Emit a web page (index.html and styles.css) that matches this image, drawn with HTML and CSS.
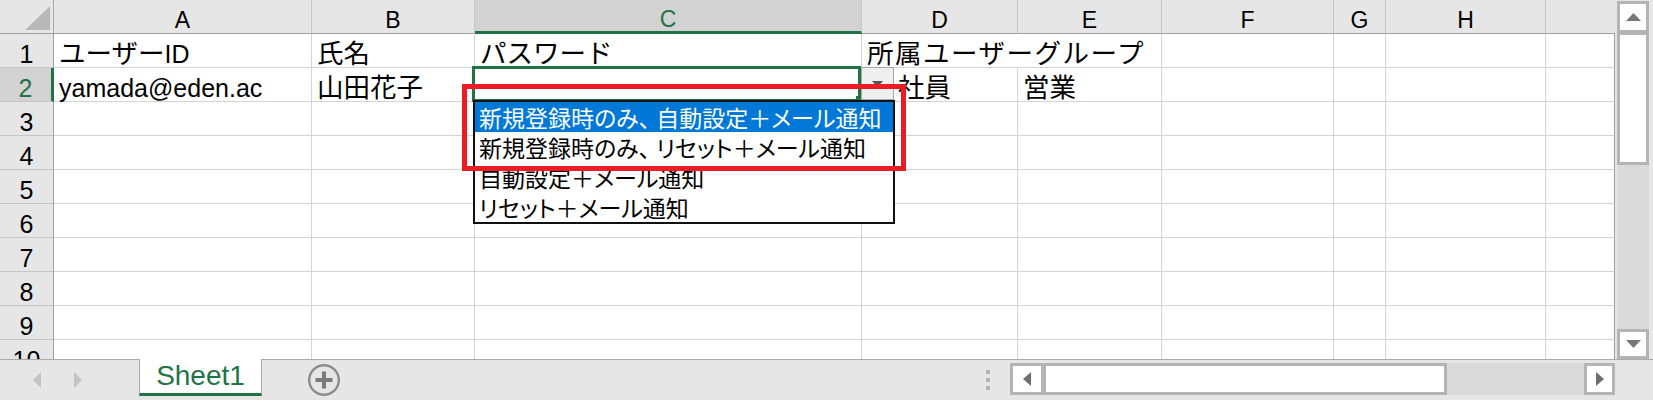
FILE: index.html
```html
<!DOCTYPE html>
<html lang="ja">
<head>
<meta charset="utf-8">
<title>Sheet1</title>
<link rel="stylesheet" href="styles.css">
</head>
<body>
<div class="app">
  <div class="main">
    <div class="sheet">
      <div class="grid">
        <div class="corner"><span class="tri"></span></div>
        <div class="ch">A</div>
        <div class="ch">B</div>
        <div class="ch sel">C</div>
        <div class="ch">D</div>
        <div class="ch">E</div>
        <div class="ch">F</div>
        <div class="ch">G</div>
        <div class="ch">H</div>
        <div class="ch lastch"></div>

        <div class="rh">1</div>
        <div class="c"><span class="ja">ユーザー</span>ID</div>
        <div class="c"><span class="ja">氏名</span></div>
        <div class="c"><span class="ja">パスワード</span></div>
        <div class="c over"><span class="ja wide">所属ユーザーグループ</span></div>
        <div class="c"></div>
        <div class="c"></div>
        <div class="c"></div>
        <div class="c"></div>
        <div class="c last"></div>

        <div class="rh selr">2</div>
        <div class="c">yamada@eden.ac</div>
        <div class="c"><span class="ja">山田花子</span></div>
        <div class="c"></div>
        <div class="c d2"><span class="ja">社員</span></div>
        <div class="c"><span class="ja">営業</span></div>
        <div class="c"></div>
        <div class="c"></div>
        <div class="c"></div>
        <div class="c last"></div>

        <div class="rh">3</div>
        <div class="c"></div><div class="c"></div><div class="c"></div><div class="c"></div><div class="c"></div><div class="c"></div><div class="c"></div><div class="c"></div><div class="c last"></div>
        <div class="rh">4</div>
        <div class="c"></div><div class="c"></div><div class="c"></div><div class="c"></div><div class="c"></div><div class="c"></div><div class="c"></div><div class="c"></div><div class="c last"></div>
        <div class="rh">5</div>
        <div class="c"></div><div class="c"></div><div class="c"></div><div class="c"></div><div class="c"></div><div class="c"></div><div class="c"></div><div class="c"></div><div class="c last"></div>
        <div class="rh">6</div>
        <div class="c"></div><div class="c"></div><div class="c"></div><div class="c"></div><div class="c"></div><div class="c"></div><div class="c"></div><div class="c"></div><div class="c last"></div>
        <div class="rh">7</div>
        <div class="c"></div><div class="c"></div><div class="c"></div><div class="c"></div><div class="c"></div><div class="c"></div><div class="c"></div><div class="c"></div><div class="c last"></div>
        <div class="rh">8</div>
        <div class="c"></div><div class="c"></div><div class="c"></div><div class="c"></div><div class="c"></div><div class="c"></div><div class="c"></div><div class="c"></div><div class="c last"></div>
        <div class="rh">9</div>
        <div class="c"></div><div class="c"></div><div class="c"></div><div class="c"></div><div class="c"></div><div class="c"></div><div class="c"></div><div class="c"></div><div class="c last"></div>
        <div class="rh">10</div>
        <div class="c"></div><div class="c"></div><div class="c"></div><div class="c"></div><div class="c"></div><div class="c"></div><div class="c"></div><div class="c"></div><div class="c last"></div>
      </div>

      <div class="selbox"></div>
      <div class="fill"></div>
      <div class="ddbtn"><svg width="11" height="6" viewBox="0 0 11 6"><path d="M0 0H11L5.5 6Z" fill="#555"/></svg></div>
      <div class="dd">
        <div class="it on">新規登録時のみ<span class="comma">、</span>自動設定＋メール通知</div>
        <div class="it">新規登録時のみ<span class="comma">、</span>リセット＋メール通知</div>
        <div class="it">自動設定＋メール通知</div>
        <div class="it">リセット＋メール通知</div>
      </div>
      <div class="mark"></div>
    </div>

    <div class="vscroll">
      <div class="vbtn"><svg width="15" height="8" viewBox="0 0 15 8"><path d="M0 8H15L7.5 0Z" fill="#777"/></svg></div>
      <div class="vthumb"></div>
      <div class="vtrack"></div>
      <div class="vbtn down"><svg width="15" height="8" viewBox="0 0 15 8"><path d="M0 0H15L7.5 8Z" fill="#777"/></svg></div>
    </div>
  </div>

  <div class="tabbar">
    <div class="nav">
      <svg width="8" height="16" viewBox="0 0 8 16"><path d="M8 0V16L0 8Z" fill="#c4c4c4"/></svg>
      <svg width="8" height="16" viewBox="0 0 8 16"><path d="M0 0V16L8 8Z" fill="#c4c4c4"/></svg>
    </div>
    <div class="tab">Sheet1</div>
    <div class="add">
      <svg width="34" height="34" viewBox="0 0 34 34"><circle cx="17" cy="17" r="14.8" fill="none" stroke="#8c8c8c" stroke-width="2.4"/><path d="M17 8.5V25.5M8.5 17H25.5" stroke="#7a7a7a" stroke-width="4"/></svg>
    </div>
    <div class="dots"><i></i><i></i><i></i></div>
    <div class="hscroll">
      <div class="hbtn"><svg width="8" height="14" viewBox="0 0 8 14"><path d="M8 0V14L0 7Z" fill="#6f6f6f"/></svg></div>
      <div class="hthumb"></div>
      <div class="htrack"></div>
      <div class="hbtn right"><svg width="8" height="14" viewBox="0 0 8 14"><path d="M0 0V14L8 7Z" fill="#6f6f6f"/></svg></div>
    </div>
    <div class="corner2"></div>
  </div>
</div>
</body>
</html>
```

FILE: styles.css
```css
* { box-sizing: border-box; margin: 0; padding: 0; }
html, body { width: 1653px; height: 400px; overflow: hidden; background: #fff; }
body { font-family: "Liberation Sans", "Noto Sans CJK JP", sans-serif; color: #000; }

.app { display: flex; flex-direction: column; width: 1653px; height: 400px; }
.main { display: flex; height: 359px; }

.sheet { position: relative; width: 1615px; height: 359px; overflow: hidden; background: #fff; }
.grid {
  display: grid;
  grid-template-columns: 54px 258px 163px 387px 156px 144px 172px 52px 160px 69px;
  grid-auto-rows: 34px;
}

.corner {
  background: #e6e6e6;
  border-right: 1px solid #ababab;
  border-bottom: 1px solid #9f9f9f;
  display: flex; justify-content: flex-end; align-items: flex-end;
  padding: 0 3px 3px 0;
}
.tri { width: 25px; height: 24px; background: #b9b9b9; clip-path: polygon(100% 0, 100% 100%, 0 100%); }

.ch {
  background: #e6e6e6;
  border-right: 1px solid #c6c6c6;
  border-bottom: 1px solid #9f9f9f;
  font-size: 23px; line-height: 23px;
  display: flex; justify-content: center; align-items: flex-end;
  padding-bottom: 1px;
}
.ch.sel { background: #d2d2d2; color: #217346; border-bottom: 3px solid #217346; padding-bottom: 0; }
.ch.lastch { border-right: none; }

.rh {
  background: #e6e6e6;
  border-right: 1px solid #9f9f9f;
  border-bottom: 1px solid #c6c6c6;
  font-size: 25px; line-height: 25px;
  display: flex; justify-content: center; align-items: flex-end;
}
.rh.selr { background: #d2d2d2; color: #217346; border-right: 3px solid #217346; }

.c {
  border-right: 1px solid #d4d4d4;
  border-bottom: 1px solid #d4d4d4;
  font-size: 25px; line-height: 25px;
  display: flex; align-items: flex-end;
  padding: 0 5px;
  white-space: nowrap;
}
.c.over { border-right: none; }
.c.last { border-right: 1px solid #9f9f9f; }
.c.d2 { padding-left: 36px; }
.ja { font-size: 26.5px; }
.ja.wide { letter-spacing: 1.5px; }

.selbox {
  position: absolute; left: 472px; top: 66px; width: 389px; height: 36px;
  border: 3px solid #217346;
}
.fill { position: absolute; left: 856px; top: 96px; width: 6px; height: 6px; background: #217346; }

.ddbtn {
  position: absolute; left: 861px; top: 67px; width: 33px; height: 33px;
  background: #efefef; border: 1px solid #a8a8a8;
  display: flex; justify-content: center; align-items: center;
}
.ddbtn svg { display: block; }

.dd {
  position: absolute; left: 473px; top: 100px; width: 422px;
  background: #fff; border: 2px solid #111;
  font-family: "Noto Sans CJK JP", sans-serif;
  font-feature-settings: "palt";
  font-size: 23px;
}
.dd .it { height: 30px; display: flex; align-items: center; padding-left: 4px; white-space: nowrap; line-height: 30px; }
.dd .it.on { background: #0078d7; color: #fff; }
.dd .comma { margin-right: 6px; }

.mark {
  position: absolute; left: 462px; top: 84px; width: 444px; height: 87px;
  border: 5px solid #ec1c24;
}

.vscroll {
  width: 38px; height: 359px; background: #e6e6e6;
  display: flex; flex-direction: column;
  padding: 1px 4px 0 2px;
}
.vbtn {
  height: 32px; background: #fff; border: 3px solid #b4b4b4;
  display: flex; justify-content: center; align-items: center;
}
.vbtn.down { height: 30px; }
.vthumb { height: 132px; background: #fff; border: 3px solid #b4b4b4; border-top-width: 2px; }
.vtrack { flex: 1; background: #dadada; }
.vscroll svg, .hscroll svg, .nav svg, .add svg { display: block; }

.tabbar {
  height: 41px; background: #e6e6e6; border-top: 1px solid #ababab;
  display: flex; align-items: flex-start;
}
.nav { width: 139px; height: 40px; display: flex; align-items: center; gap: 33px; padding-left: 33px; }
.tab {
  width: 123px; height: 37px; margin-top: -1px;
  background: #fff;
  border-left: 1px solid #ababab; border-right: 1px solid #ababab;
  border-bottom: 3px solid #217346;
  color: #217346; font-size: 28px;
  display: flex; justify-content: center; align-items: center;
}
.add { margin-left: 45px; height: 40px; display: flex; align-items: center; }
.dots { margin-left: auto; margin-right: 20px; height: 40px; display: flex; flex-direction: column; justify-content: center; gap: 4px; }
.dots i { display: block; width: 4px; height: 4px; background: #b3b3b3; }
.hscroll { width: 605px; height: 32px; margin-top: 3px; display: flex; }
.hbtn {
  width: 34px; height: 32px; background: #fff; border: 3px solid #b4b4b4;
  display: flex; justify-content: center; align-items: center;
}
.hbtn.right { width: 31px; }
.hthumb { width: 403px; background: #fff; border: 3px solid #b4b4b4; border-left-width: 2px; }
.htrack { width: 137px; background: #dadada; }
.corner2 { width: 38px; height: 40px; }
```
